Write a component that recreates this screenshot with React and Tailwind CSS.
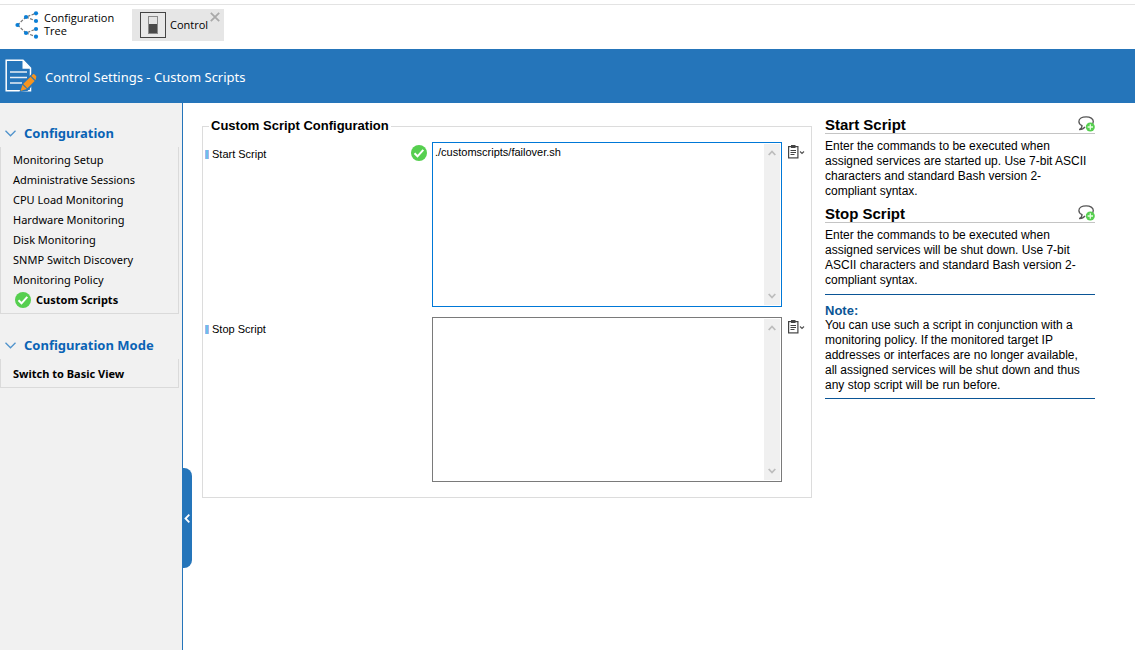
import React from "react";

const uiFont = "font-['Open_Sans','Noto_Sans',sans-serif]";
const headingFont = "font-['Noto_Sans','Open_Sans',sans-serif]";
const formFont = "font-['Liberation_Sans',Arial,sans-serif]";

function TreeIcon() {
  return (
    <svg width="26" height="28" viewBox="0 0 26 28" aria-hidden="true">
      <g stroke="#777" strokeWidth="1.2" strokeDasharray="3 1.4" fill="none">
        <path d="M2.500 14 11 6 21 2.300M11 6 21 10M2.500 14 11 22 21 18M11 22 21 25.700" />
      </g>
      <g fill="#0b7fd6">
        <circle cx="2.500" cy="14" r="2.100" />
        <circle cx="11" cy="6" r="2.100" />
        <circle cx="11" cy="22" r="2.100" />
        <circle cx="21" cy="2.300" r="2.100" />
        <circle cx="21" cy="10" r="2.100" />
        <circle cx="21" cy="18" r="2.100" />
        <circle cx="21" cy="25.700" r="2.100" />
      </g>
    </svg>
  );
}

function ControlIcon() {
  return (
    <svg width="26" height="26" viewBox="0 0 26 26" aria-hidden="true">
      <rect x=".5" y=".5" width="25" height="25" fill="#e8e8e8" stroke="#444" />
      <rect x="8.500" y="4.500" width="9" height="17" fill="#e4e4e4" stroke="#8a8a8a" />
      <rect x="9" y="12" width="8" height="9" fill="#4a4a4a" />
    </svg>
  );
}

function DocumentIcon() {
  return (
    <svg width="33" height="34" viewBox="0 0 33 34" aria-hidden="true">
      <path d="M1.200 1.200H18L25.500 9V31.800H1.200Z" fill="none" stroke="#fff" strokeWidth="1.500" />
      <path d="M17.500 1 26 9.800H17.500Z" fill="#fff" />
      <path d="M5 13H22M5 18.500H22M5 24H17" stroke="#e8eef5" strokeWidth="1.500" />
      <path d="M14.500 33 16.500 25 27.500 14 33.500 20 22.500 32Z" fill="#2575ba" />
      <path d="M15.500 32 17.500 25.800 21.800 30Z" fill="#f7941e" />
      <path d="M18.200 25 25.500 17.800 29.700 22 22.400 29.300Z" fill="#f7941e" />
      <path d="M26.300 17 28 15.300Q28.800 14.800 29.600 15.500L31 17Q31.600 17.700 31.200 18.500L30.500 21.200Z" fill="#f7941e" />
    </svg>
  );
}

function CheckIcon() {
  return (
    <svg width="16" height="16" viewBox="0 0 16 16" className="shrink-0" aria-hidden="true">
      <circle cx="8" cy="8" r="8" fill="#56cf4f" />
      <path d="M3.500 8.300 6.500 11.300 12.300 4.800" fill="none" stroke="#fff" strokeWidth="2" />
    </svg>
  );
}

function Chevron({ className }) {
  return (
    <svg width="11" height="7" viewBox="0 0 11 7" className={className} aria-hidden="true">
      <path d="M.5 .8 5.500 5.800 10.500 .8" fill="none" stroke="currentColor" strokeWidth="1.300" />
    </svg>
  );
}

function ScrollArrow({ up }) {
  return (
    <svg width="8" height="6" viewBox="0 0 8 6" aria-hidden="true">
      <path d={up ? "M.7 5 4 1.500 7.300 5" : "M.7 1 4 4.500 7.300 1"} fill="none" stroke="currentColor" strokeWidth="1.800" />
    </svg>
  );
}

function ClipboardIcon() {
  return (
    <svg width="17" height="14" viewBox="0 0 17 14" aria-hidden="true">
      <rect x=".6" y="1.600" width="9.300" height="11.300" fill="#fff" stroke="#444" strokeWidth="1.200" />
      <rect x="3" y="0" width="4.500" height="3" fill="#444" />
      <path d="M2.500 5.500H8M2.500 7.500H8M2.500 9.500H6.500" stroke="#444" />
      <path d="M12 6.500 14 8.500 16 6.500" fill="none" stroke="#555" strokeWidth="1.100" />
    </svg>
  );
}

function CommentIcon() {
  return (
    <svg width="17" height="16" viewBox="0 0 17 16" aria-hidden="true">
      <path d="M8 10.300C9 10.200 15.300 9.800 15.300 5.600 15.300 2.700 12.200 .8 8.200 .8 4 .8 .9 2.800 .9 5.600 .9 7.600 2.200 8.900 4 9.700 4 11.500 3 12.800 1.200 13.500 3.800 13.600 5.800 12.600 7 10.800" fill="none" stroke="#555" strokeWidth="1.300" />
      <circle cx="12.300" cy="11" r="4.500" fill="#56cf4f" />
      <path d="M12.300 8.300V13.700M9.600 11H15" stroke="#e5ffe2" strokeWidth="1.300" />
    </svg>
  );
}

function Group({ title, children }) {
  return (
    <section className="mr-[3px]">
      <button type="button" className="flex h-[27px] w-full items-center gap-2 pl-[5px] text-left text-[13px] font-bold text-[#0a63b5]">
        <Chevron className="text-[#4f93cc]" />
        <span>{title}</span>
      </button>
      <ul className="border border-t-0 border-[#dadada] py-[3px] pl-3 text-[11px] leading-5 text-black">{children}</ul>
    </section>
  );
}

const links = [
  "Monitoring Setup",
  "Administrative Sessions",
  "CPU Load Monitoring",
  "Hardware Monitoring",
  "Disk Monitoring",
  "SNMP Switch Discovery",
  "Monitoring Policy",
];

function ScriptRow({ id, label, value, active }) {
  return (
    <div className="flex items-start">
      <label htmlFor={id} className="flex w-[206px] items-center gap-[3px] pt-1 pl-0.5 text-[11px] leading-4 text-black">
        <span className="h-[9px] w-1 border-x border-[#a9b4ec] bg-[#6cc0ea]" />
        {label}
      </label>
      <div className="w-[23px] shrink-0 pt-[3px] pl-0.5">{active && <CheckIcon />}</div>
      <div className={`flex h-[165px] min-w-0 flex-1 border ${active ? "border-[#0078d7]" : "border-[#7a7a7a]"} bg-white pr-px`}>
        <textarea
          id={id}
          defaultValue={value}
          spellCheck={false}
          className="min-w-0 flex-1 resize-none px-0.5 py-px text-[11px] leading-4 text-black outline-none"
        />
        <div className="my-px flex w-4 flex-col items-center justify-between bg-[#f0f0f0] py-[6px] text-[#bdbdbd]">
          <ScrollArrow up />
          <ScrollArrow />
        </div>
      </div>
      <button type="button" aria-label={`${label} options`} className="mt-[3px] mr-[6px] ml-[6px]">
        <ClipboardIcon />
      </button>
    </div>
  );
}

function Help({ title, children }) {
  return (
    <section>
      <div className="flex h-[18px] items-end justify-between border-b border-[#c4c4c4]">
        <h2 className="text-[15px] leading-4 font-bold">{title}</h2>
        <button type="button" aria-label={`Comment on ${title}`} className="pb-px">
          <CommentIcon />
        </button>
      </div>
      <p className="pt-[5px] pb-1.5">{children}</p>
    </section>
  );
}

export default function App() {
  return (
    <div className={`flex min-h-screen flex-col bg-white ${uiFont}`}>
      <nav className="mt-1 flex h-[45px] items-start border-t border-[#e3e3e3] pl-[15px] text-[11px] leading-[13px] text-black">
        <button type="button" className="mt-[6px] flex w-[117px] items-center gap-[3px] text-left">
          <TreeIcon />
          <span className="pb-0.5">
            Configuration
            <br />
            Tree
          </span>
        </button>
        <div className="mt-1 flex h-8 w-[92px] items-start bg-[#e6e6e6] pl-2">
          <button type="button" className="mt-[3px] flex items-center gap-1">
            <ControlIcon />
            <span className="pb-0.5">Control</span>
          </button>
          <button type="button" aria-label="Close tab" className="mt-[3px] mr-1 ml-auto">
            <svg width="10" height="10" viewBox="0 0 10 10" aria-hidden="true">
              <path d="M.8 .8 9.200 9.200M9.200 .8 .8 9.200" stroke="#a9a9a9" strokeWidth="1.800" />
            </svg>
          </button>
        </div>
      </nav>

      <header className="flex h-[54px] items-center gap-[7px] bg-[#2575ba] pl-[5px] text-white">
        <DocumentIcon />
        <h1 className={`pt-1 text-[13px] ${headingFont}`}>Control Settings - Custom Scripts</h1>
      </header>

      <div className="flex flex-1 items-stretch">
        <aside className={`relative w-[183px] shrink-0 border-r border-[#2575ba] bg-[#f1f1f1] pt-[17px] ${headingFont}`}>
          <div className="flex flex-col gap-[18px]">
            <Group title="Configuration">
              {links.map((text) => (
                <li key={text}>
                  <a href="#">{text}</a>
                </li>
              ))}
              <li>
                <a href="#" className="flex items-center gap-[5px] pl-[2px] font-bold">
                  <CheckIcon />
                  Custom Scripts
                </a>
              </li>
            </Group>
            <Group title="Configuration Mode">
              <li className="pt-0.5 font-bold">
                <a href="#">Switch to Basic View</a>
              </li>
            </Group>
          </div>
          <button
            type="button"
            aria-label="Collapse sidebar"
            className="absolute top-[365px] -right-[10px] flex h-[100px] w-[10px] items-center justify-center rounded-r-lg bg-[#2575ba]"
          >
            <svg width="6" height="9" viewBox="0 0 6 9" aria-hidden="true">
              <path d="M5.300 .7 1.500 4.500 5.300 8.300" fill="none" stroke="#fff" strokeWidth="1.800" />
            </svg>
          </button>
        </aside>

        <main className={`flex min-w-0 flex-1 items-start gap-[13px] pt-[13px] pr-10 pl-[19px] ${formFont}`}>
          <fieldset className="mt-0.5 min-w-0 flex-1 border border-[#dcdcdc] pb-[15px]">
            <legend className="ml-1.5 px-0.5 text-[13px] leading-4 font-bold text-black">Custom Script Configuration</legend>
            <div className="flex flex-col gap-[10px] pt-2">
              <ScriptRow id="start" label="Start Script" value="./customscripts/failover.sh" active />
              <ScriptRow id="stop" label="Stop Script" value="" />
            </div>
          </fieldset>

          <aside className="w-[270px] shrink-0 text-[12px] leading-[15px] text-black">
            <Help title="Start Script">
              Enter the commands to be executed when assigned services are started up. Use 7-bit ASCII characters and
              standard Bash version 2-
              <br />
              compliant syntax.
            </Help>
            <Help title="Stop Script">
              Enter the commands to be executed when assigned services will be shut down. Use 7-bit ASCII characters and
              standard Bash version 2-
              <br />
              compliant syntax.
            </Help>
            <div className="border-y border-[#0a5596] pt-2 pb-[5px]">
              <h3 className="text-[13px] leading-[15px] font-bold text-[#0a5596]">Note:</h3>
              <p className="pr-1">
                You can use such a script in conjunction with a monitoring policy. If the monitored target IP addresses
                or interfaces are no longer available, all assigned services will be shut down and thus any stop script
                will be run before.
              </p>
            </div>
          </aside>
        </main>
      </div>
    </div>
  );
}
